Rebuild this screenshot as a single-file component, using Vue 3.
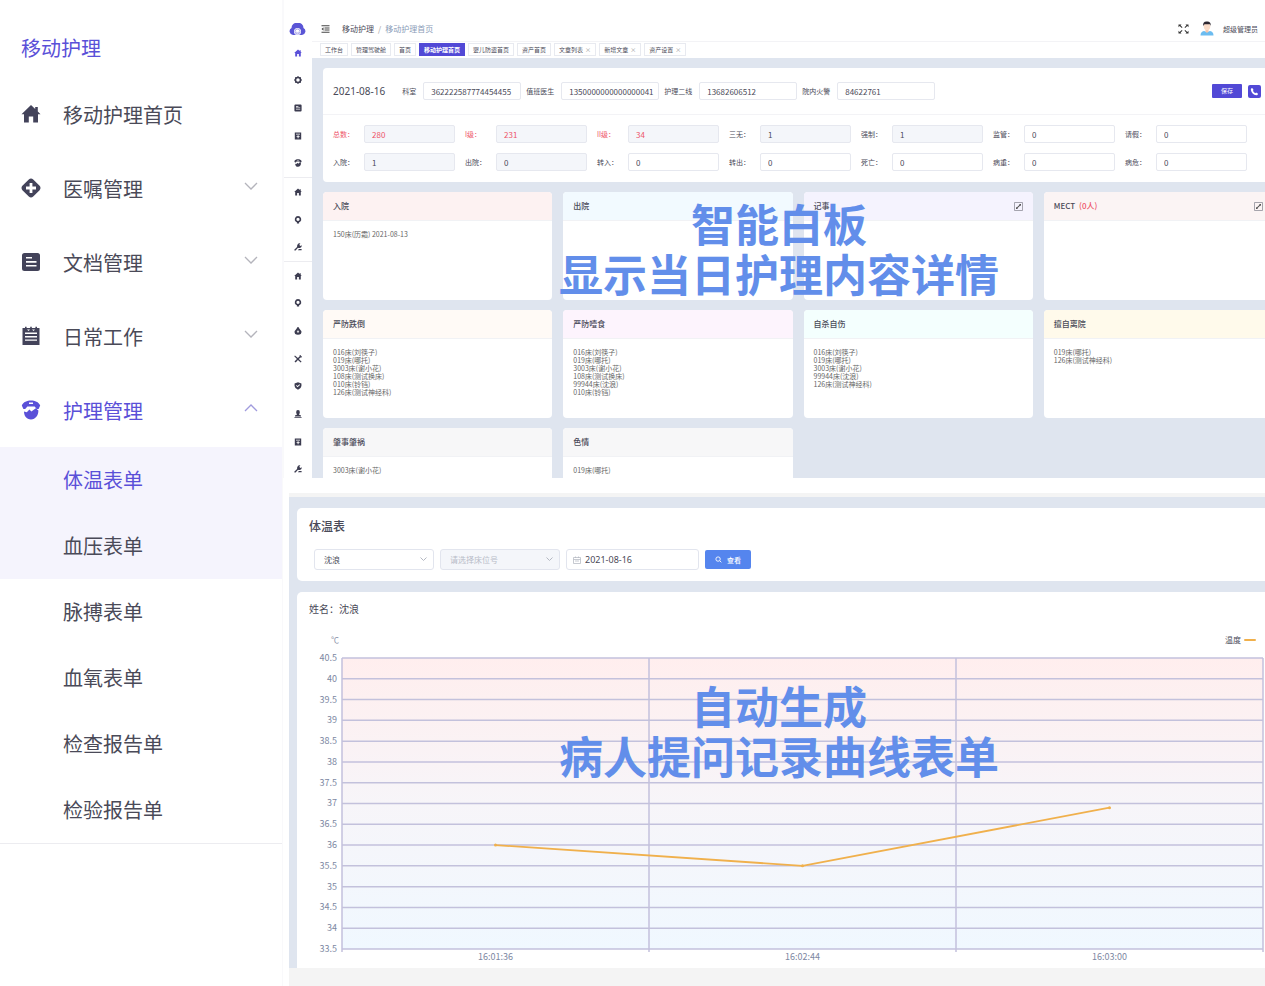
<script setup>
import { ref } from 'vue'

const icons = {
  home: 'M10 1 .5 10.2H3V18.5H7.8V12.6H12.2V18.5H17V10.2H19.5L16.8 7.6V3H14.2V5Z',
  medical: 'M7.8 1.4Q10-.4 12.2 1.4L18.6 7.8Q20.4 10 18.6 12.2L12.2 18.6Q10 20.4 7.8 18.6L1.400 12.200Q-.4 10 1.400 7.800ZM8.600 5V8.600H5V11.400H8.600V15H11.400V11.400H15V8.600H11.400V5Z',
  doc: 'M3.5 1H16.5Q19 1 19 3.5V16.5Q19 19 16.5 19H3.5Q1 19 1 16.5V3.5Q1 1 3.5 1ZM5 5V6.6H11V5ZM5 9V10.8H15.5V9ZM5 13V14.6H15.5V13Z',
  note: 'M1.5 2H4V.8H5.6V2H9.2V.8H10.8V2H14.4V.8H16V2H18.5V19H1.5ZM4 6.6V8H16V6.6ZM4 10V11.4H16V10ZM4 13.4V14.8H16V13.4ZM6 3.4 7.6 5 9 3.4ZM11 3.4 12.6 5 14 3.4Z',
  nurse: 'M.8 5.600C2.400 2 6 .6 10 .6S17.600 2 19.200 5.600L17.600 9H15.800L13.600 6.400H6.400L4.200 9H2.400ZM8 2.600V4H12V2.600ZM3 11.600 5.800 12.200 8.400 9.400 10.400 11.600 14.800 8.200 17.400 10.600C17.400 15.600 14.600 19.400 10 19.400S3 16 3 11.600Z',
  gear: 'M10 0 13 2.400 17.500 3 17.600 7 20 10 17.600 13 17.500 17 13 17.600 10 20 7 17.600 2.500 17 2.400 13 0 10 2.400 7 2.500 3 7 2.400ZM10 5.600A4.400 4.400 0 1 0 10 14.400 4.400 4.400 0 1 0 10 5.600Z',
  box: 'M2 1H18V19H2ZM5 4.600V6H15V4.600ZM9 8V10.400H6.400V12.800H9V15.400H11.400V12.800H14V10.400H11.400V8Z',
  pin: 'M10 0A8.400 8.400 0 0 1 15.400 14.600L12.800 15.600V19H7.200V15.600L4.600 14.600A8.400 8.400 0 0 1 10 0ZM10 4.200A4 4 0 1 0 10 12.200 4 4 0 1 0 10 4.200Z',
  wrench: 'M11 1Q15 0 16 1L13.200 4.600 15.600 7.400 19.400 5.600Q20 11 15 12.400 12 13 10 12L4 18.600Q1 19.600.6 16.600L7.600 10Q7 4 11 1ZM12 15H19V18H10Z',
  drop: 'M8 .5H12L13.200 4 18.600 10.600Q19.600 19.500 10 19.500T1.400 10.600L6.800 4ZM10 8 6.600 11.600H9V15H11V11.600H13.400Z',
  tools: 'M2.400 1 9.800 7.800 14.200 3.200 13.800.8 17 0 17 3 20 3.200 19 6.400 16.400 6 12.200 10.200 19 16.600 16.800 19 9.800 12.600 4.200 18.800 1.200 16 7.400 10.200.6 3.200Z',
  shield: 'M10 .6 18.600 3.600V10Q18 16.400 10 19.600 2 16.400 1.400 10V3.600ZM5.200 9.200 9 13 15 7.200 13.600 5.800 9 10.200 6.600 7.800Z',
  user: 'M10 0Q15 0 14.600 6 14 9.600 12.200 11L17.500 13.600V16H2.500V13.600L7.800 11Q6 9.600 5.400 6 5 0 10 0ZM1 17.400H19V19.600H1Z',
}

const menu = [
  { icon: 'home', text: '移动护理首页' },
  { icon: 'medical', text: '医嘱管理', arrow: 'down' },
  { icon: 'doc', text: '文档管理', arrow: 'down' },
  { icon: 'note', text: '日常工作', arrow: 'down' },
  { icon: 'nurse', text: '护理管理', arrow: 'up' },
]
const submenu = ['体温表单', '血压表单', '脉搏表单', '血氧表单', '检查报告单', '检验报告单']

const railGroups = [
  ['home', 'gear', 'doc', 'box', 'nurse'],
  ['home', 'pin', 'wrench'],
  ['home', 'pin', 'drop', 'tools', 'shield', 'user', 'box', 'wrench'],
]

const tabs = [
  { text: '工作台' },
  { text: '管理驾驶舱' },
  { text: '首页' },
  { text: '移动护理首页', active: true },
  { text: '婴儿防盗首页' },
  { text: '资产首页' },
  { text: '文章列表', closable: true },
  { text: '新增文章', closable: true },
  { text: '资产设置', closable: true },
]

const contacts = ref([
  { id: 'dept', label: '科室', value: '362222587774454455' },
  { id: 'doctor', label: '值班医生', value: '1350000000000000041' },
  { id: 'second', label: '护理二线', value: '13682606512' },
  { id: 'fire', label: '院内火警', value: '84622761' },
])

const stats = ref([
  { label: '总数', value: '280', locked: true, red: true },
  { label: 'I级', value: '231', locked: true, red: true },
  { label: 'II级', value: '34', locked: true, red: true },
  { label: '三无', value: '1', locked: true },
  { label: '强制', value: '1', locked: true },
  { label: '监管', value: '0' },
  { label: '请假', value: '0' },
  { label: '入院', value: '1', locked: true },
  { label: '出院', value: '0', locked: true },
  { label: '转入', value: '0' },
  { label: '转出', value: '0' },
  { label: '死亡', value: '0' },
  { label: '病重', value: '0' },
  { label: '病危', value: '0' },
])

const boards = [
  { title: '入院', tone: 'rose', rows: ['150床(历霜) 2021-08-13'] },
  { title: '出院', tone: 'sky', rows: [] },
  { title: '记事', tone: 'violet', rows: [], expand: true },
  { title: 'MECT', count: '(0人)', tone: 'blush', rows: [], expand: true },
  { title: '严防跌倒', tone: 'peach', rows: ['016床(刘筷子)', '019床(哪托)', '3003床(谢小花)', '108床(测试换床)', '010床(铃铛)', '126床(测试神经科)'] },
  { title: '严防噎食', tone: 'pink', rows: ['016床(刘筷子)', '019床(哪托)', '3003床(谢小花)', '108床(测试换床)', '99944床(沈浪)', '010床(铃铛)'] },
  { title: '自杀自伤', tone: 'mint', rows: ['016床(刘筷子)', '019床(哪托)', '3003床(谢小花)', '99944床(沈浪)', '126床(测试神经科)'] },
  { title: '擅自离院', tone: 'cream', rows: ['019床(哪托)', '126床(测试神经科)'] },
  { title: '肇事肇祸', tone: 'grey', rows: ['3003床(谢小花)'] },
  { title: '色情', tone: 'grey', rows: ['019床(哪托)'] },
]

const yMax = 40.5
const yMin = 33.5
const yTicks = Array.from({ length: 15 }, (_, i) => yMax - i * 0.5)
const readings = [
  { time: '16:01:36', value: 36 },
  { time: '16:02:44', value: 35.5 },
  { time: '16:03:00', value: 36.9 },
]
const plotW = 921
const plotH = 291
const toY = (v) => ((yMax - v) / (yMax - yMin)) * plotH
const points = readings.map((r, i) => ({ x: ((i + 0.5) * plotW) / 3, y: toY(r.value) }))
const line = points.map((p) => `${p.x},${p.y}`).join(' ')

const patient = ref('沈浪')
const date = ref('2021-08-16')
</script>

<template>
  <div class="page">
    <aside class="side">
      <h1 class="side-title">移动护理</h1>
      <nav>
        <button v-for="m in menu" :key="m.text" type="button" class="side-item" :class="{ on: m.arrow === 'up' }">
          <svg class="side-icon" viewBox="0 0 20 20"><path :d="icons[m.icon]" fill-rule="evenodd" /></svg>
          <span>{{ m.text }}</span>
          <svg v-if="m.arrow" class="chev" :class="m.arrow" viewBox="0 0 14 8"><path d="M1 1 7 7 13 1" /></svg>
        </button>
        <div class="sub">
          <a v-for="(s, i) in submenu" :key="s" href="#" class="sub-item" :class="{ tint: i < 2, on: i === 0 }">{{ s }}</a>
        </div>
      </nav>
    </aside>

    <div class="main">
      <section class="board">
        <div class="rail">
          <svg class="logo" viewBox="0 0 34 26">
            <path d="M8 24A7.500 7.500 0 0 1 5 10 12 11 0 0 1 29 10 7.500 7.500 0 0 1 26 24Z" fill="#5a55d6" />
            <circle cx="17" cy="17" r="7" fill="#fff" />
            <circle cx="17" cy="17" r="5" fill="none" stroke="#a9a6ea" stroke-width="2" />
            <path d="M14 18Q17 21 20 18" fill="none" stroke="#a9a6ea" stroke-width="1.500" />
          </svg>
          <div class="rail-list">
            <div v-for="(g, gi) in railGroups" :key="gi" class="rail-group" :style="{ flexGrow: g.length }">
              <a v-for="(n, i) in g" :key="i" href="#" class="rail-item" :class="{ on: gi === 0 && i === 0 }" :aria-label="n">
                <svg viewBox="0 0 20 20"><path :d="icons[n]" fill-rule="evenodd" /></svg>
              </a>
            </div>
          </div>
        </div>

        <div class="work">
          <header class="top">
            <svg class="fold" viewBox="0 0 18 16"><path d="M1 1.500H17M7 6H17M7 10H17M1 14.500H17" stroke="#444" stroke-width="2" /><path d="M5 4.500V11.500L1 8Z" fill="#444" /></svg>
            <div class="crumb"><a href="#">移动护理</a><i>/</i><b>移动护理首页</b></div>
            <svg class="full" viewBox="0 0 22 20"><path d="M1 1H7L5.200 2.800 9 6.600 7.600 8 3.400 4.200 1 6.500ZM21 1V6.500L18.600 4.200 14.400 8 13 6.600 16.800 2.800 15 1ZM1 19V13.500L3.400 15.800 7.600 12 9 13.400 5.200 17.200 7 19ZM21 19H15L16.800 17.200 13 13.400 14.400 12 18.600 15.800 21 13.500Z" fill="#333" /></svg>
            <svg class="avatar" viewBox="0 0 28 30">
              <path d="M1 29Q1 21 8 20L14 22 20 20Q27 21 27 29Z" fill="#6cbcf0" />
              <path d="M11 16H17V21L14 24 11 21Z" fill="#f6c7ac" />
              <ellipse cx="14" cy="10.500" rx="6.500" ry="8" fill="#fbdcc8" />
              <path d="M6.500 10Q5 1 13 1 22.500 0 21.500 10L20 6.500H9Z" fill="#2c2730" />
            </svg>
            <span class="user">超级管理员</span>
          </header>
          <div class="tabs">
            <button v-for="t in tabs" :key="t.text" type="button" class="tab" :class="{ on: t.active }">{{ t.text }}<i v-if="t.closable">×</i></button>
          </div>

          <div class="content">
            <div class="panel">
              <div class="duty">
                <strong class="day">2021-08-16</strong>
                <div v-for="c in contacts" :key="c.id" class="duty-field">
                  <label :for="c.id">{{ c.label }}</label>
                  <input :id="c.id" v-model="c.value" type="text" />
                </div>
                <button type="button" class="save">保存</button>
                <button type="button" class="call" aria-label="呼叫">
                  <svg viewBox="0 0 20 20"><path d="M5 2 8 6.500 6.400 8.400Q8.500 12 11.800 13.800L13.600 12 18 15Q17 18.600 14 18.400 4 16.500 1.800 6 1.600 2.600 5 2Z" fill="#fff" /></svg>
                </button>
              </div>
              <div class="stats">
                <div v-for="(s, i) in stats" :key="i" class="stat" :class="{ red: s.red }">
                  <label :for="'stat' + i">{{ s.label }}：</label>
                  <input :id="'stat' + i" v-model="s.value" type="text" :readonly="s.locked" :class="{ locked: s.locked }" />
                </div>
              </div>
            </div>
            <div class="cards">
              <article v-for="b in boards" :key="b.title" class="card">
                <header :class="b.tone">
                  <h2>{{ b.title }}<em v-if="b.count">{{ b.count }}</em></h2>
                  <svg v-if="b.expand" class="expand" viewBox="0 0 18 18"><path d="M1 1H17V17H1Z" fill="none" stroke="#8a8a94" stroke-width="1.500" /><path d="M10 4H14V8L12.600 6.800 6.800 12.600 8 14H4V10L5.400 11.200 11.200 5.400Z" fill="#555" /></svg>
                </header>
                <ul>
                  <li v-for="r in b.rows" :key="r">{{ r }}</li>
                </ul>
              </article>
            </div>
          </div>
        </div>
        <p class="caption cap-top">智能白板<br />显示当日护理内容详情</p>
      </section>

      <section class="temp">
        <div class="temp-body">
          <div class="box query">
            <h2>体温表</h2>
            <form class="form" @submit.prevent>
              <div class="sel">
                <select v-model="patient" aria-label="病人"><option>沈浪</option></select>
                <svg viewBox="0 0 14 8"><path d="M1 1 7 7 13 1" /></svg>
              </div>
              <div class="sel off">
                <select disabled aria-label="床位号"><option>请选择床位号</option></select>
                <svg viewBox="0 0 14 8"><path d="M1 1 7 7 13 1" /></svg>
              </div>
              <label class="date">
                <svg viewBox="0 0 16 16"><path d="M1 3H15V15H1ZM1 7H15M5 1V4M11 1V4M4 10H12" /></svg>
                <input v-model="date" type="text" aria-label="日期" />
              </label>
              <button type="submit" class="go">
                <svg viewBox="0 0 16 16"><circle cx="7" cy="7" r="5" /><path d="M11 11 14.500 14.500" /></svg>查看
              </button>
            </form>
          </div>
          <div class="box chart">
            <h3>姓名：沈浪</h3>
            <div class="chart-head"><span class="unit">℃</span><span class="legend">温度<i></i></span></div>
            <div class="chart-grid">
              <div class="y-axis"><span v-for="t in yTicks" :key="t">{{ t }}</span></div>
              <svg class="plot" :viewBox="`0 0 ${plotW} ${plotH}`" preserveAspectRatio="none">
                <defs>
                  <linearGradient id="heat" x1="0" y1="0" x2="0" y2="1">
                    <stop offset="0" stop-color="#ffeeee" />
                    <stop offset=".5" stop-color="#f7f5f9" />
                    <stop offset="1" stop-color="#f0f8ff" />
                  </linearGradient>
                </defs>
                <rect :width="plotW" :height="plotH" fill="url(#heat)" />
                <g class="grid">
                  <line v-for="t in yTicks" :key="t" x1="0" :x2="plotW" :y1="toY(t)" :y2="toY(t)" />
                  <line v-for="i in 4" :key="'v' + i" :x1="((i - 1) * plotW) / 3" :x2="((i - 1) * plotW) / 3" y1="0" :y2="plotH + 3" />
                </g>
                <polyline :points="line" class="curve" />
                <circle v-for="p in points" :key="p.x" :cx="p.x" :cy="p.y" r="1.500" fill="#f0b04c" />
              </svg>
              <div class="x-axis"><span v-for="r in readings" :key="r.time">{{ r.time }}</span></div>
            </div>
          </div>
        </div>
        <p class="caption cap-low">自动生成<br />病人提问记录曲线表单</p>
      </section>
    </div>
  </div>
</template>

<style>
body {
  margin: 0;
  background: #fff;
}
</style>

<style scoped>
* {
  box-sizing: border-box;
}
.page {
  display: flex;
  min-height: 100vh;
  overflow: hidden;
  color: #4a4a58;
  font-family: "Noto Sans CJK SC", "Noto Sans", sans-serif;
}
h1, h2, h3, p, ul {
  margin: 0;
  padding: 0;
  font-weight: 400;
}
ul {
  list-style: none;
}
i, em {
  font-style: normal;
}
a {
  color: inherit;
  text-decoration: none;
}
button, input, select {
  margin: 0;
  font-family: inherit;
  color: inherit;
}
button {
  border: 0;
  cursor: pointer;
}

/* side menu */
.side {
  flex: none;
  width: 283px;
  padding-top: 19px;
  border-right: 1px solid #f9f9fb;
}
.side-title {
  padding-left: 21px;
  font-size: 20px;
  line-height: 58px;
  color: #5a50d8;
}
.side-item {
  display: flex;
  align-items: center;
  width: 100%;
  height: 74px;
  padding: 0 24px 0 21px;
  background: none;
  font-size: 20px;
  text-align: left;
}
.side-icon {
  width: 20px;
  height: 20px;
  margin-right: 22px;
  fill: #43435a;
}
.side-item.on {
  color: #5a50d8;
}
.side-item.on .side-icon {
  fill: #5a50d8;
}
.chev {
  width: 14px;
  height: 8px;
  margin: 0 0 4px auto;
  fill: none;
  stroke: #b4b4bc;
  stroke-width: 1.3;
}
.chev.up {
  transform: rotate(180deg);
  stroke: #a09bdd;
}
.sub {
  border-bottom: 1px solid #ececf0;
}
.sub-item {
  display: block;
  padding-left: 63px;
  font-size: 20px;
  line-height: 66px;
}
.sub-item.tint {
  background: #f5f4fd;
}
.sub-item.on {
  color: #5a50d8;
}

.main {
  flex: 1;
  min-width: 0;
  display: flex;
  flex-direction: column;
}

/* whiteboard */
.board {
  position: relative;
  display: flex;
  height: 478px;
  overflow: hidden;
}
.rail {
  flex: none;
  width: 29px;
  border-left: 1px solid #f9f9fb;
}
.logo {
  display: block;
  width: 17px;
  height: 13px;
  margin: 23px auto 3px 5px;
}
.rail-list {
  display: flex;
  flex-direction: column;
  height: 444px;
}
.rail-group {
  display: flex;
  flex-direction: column;
  flex-basis: 0;
}
.rail-group + .rail-group {
  border-top: 1px solid #ececf0;
}
.rail-item {
  flex: 1;
  display: flex;
  align-items: center;
  justify-content: center;
}
.rail-item svg {
  width: 8px;
  height: 8px;
  fill: #3c3c50;
}
.rail-item.on svg {
  fill: #5a50d8;
}
.work {
  flex: 1;
  min-width: 0;
  display: flex;
  flex-direction: column;
}
.top {
  flex: none;
  display: flex;
  align-items: center;
  height: 42px;
  padding: 16px 7px 0 9px;
  border-bottom: 1px solid #f3f3f6;
}
.fold {
  width: 9px;
  height: 8px;
  margin-right: 12px;
}
.crumb {
  display: flex;
  gap: 4px;
  font-size: 8px;
  line-height: 10px;
}
.crumb b {
  font-weight: 400;
  color: #8a9cb8;
}
.crumb i {
  color: #999;
}
.full {
  width: 11px;
  height: 10px;
  margin-left: auto;
}
.avatar {
  width: 14px;
  height: 15px;
  margin: 0 9px 0 11px;
}
.user {
  font-size: 7px;
}
.tabs {
  flex: none;
  display: flex;
  gap: 3px;
  height: 16px;
  padding: 1px 8px 0;
}
.tab {
  height: 13px;
  padding: 0 4px;
  border: 1px solid #e8eaf0;
  background: #fff;
  font-size: 6px;
  line-height: 11px;
  white-space: nowrap;
}
.tab i {
  margin-left: 2px;
  color: #999;
}
.tab.on {
  border-color: #5249d6;
  background: #5249d6;
  color: #fff;
  font-weight: 700;
}
.content {
  flex: 1;
  min-height: 0;
  margin-right: -8px;
  padding: 10px 0 0 11px;
  background: #dfe5ef;
}
.panel {
  border-radius: 4px;
  background: #fff;
}
.duty {
  display: flex;
  align-items: center;
  height: 47px;
  padding: 0 12px 0 10px;
  border-bottom: 1px solid #f3f3f6;
}
.day {
  margin-right: 17px;
  font: 400 10px "Noto Sans", sans-serif;
}
.duty-field {
  display: flex;
  align-items: center;
  gap: 7px;
  margin-right: 5px;
  font-size: 7px;
  white-space: nowrap;
}
.duty-field input {
  width: 98px;
}
.panel input {
  min-width: 0;
  height: 18px;
  padding: 0 2px 0 7px;
  border: 1px solid #e6e8ef;
  border-radius: 2px;
  background: #fff;
  font-size: 8px;
}
.save {
  width: 30px;
  height: 14px;
  margin: 0 6px 0 auto;
  padding: 0;
  border-radius: 1px;
  background: #5249d6;
  color: #fff;
  font-size: 6px;
  line-height: 14px;
}
.call {
  width: 13px;
  height: 13px;
  padding: 2px;
  border-radius: 2px;
  background: #5249d6;
}
.call svg {
  display: block;
}
.stats {
  display: grid;
  grid-template-columns: repeat(7, minmax(0, 1fr));
  row-gap: 10px;
  padding: 10px 16px 11px 10px;
}
.stat {
  display: flex;
  align-items: center;
  padding-right: 10px;
  font-size: 7px;
}
.stat label {
  flex: none;
  width: 31px;
}
.stat input {
  flex: 1;
}
.stat input.locked {
  background: #f4f6fa;
}
.stat.red {
  color: #ee5468;
}
.cards {
  display: grid;
  grid-template-columns: repeat(4, minmax(0, 1fr));
  grid-auto-rows: 108px;
  gap: 10px 11px;
  padding-top: 10px;
}
.card {
  border-radius: 4px;
  background: #fff;
  overflow: hidden;
}
.card header {
  display: flex;
  align-items: center;
  justify-content: space-between;
  height: 29px;
  padding: 0 10px;
  border-bottom: 1px solid #f1f2f5;
}
.card h2 {
  font-size: 8px;
  line-height: 10px;
  font-weight: 500;
}
.card em {
  margin-left: 4px;
  color: #ee5468;
}
.card ul {
  padding: 9px 10px;
  font-size: 7px;
  line-height: 8px;
  color: #666;
}
.expand {
  width: 9px;
  height: 9px;
}
.rose { background: #fdf2f2; }
.sky { background: #f2faff; }
.violet { background: #f5f3fe; }
.blush { background: #fbf4f4; }
.peach { background: #fffaf6; }
.pink { background: #fdf4fd; }
.mint { background: #f4fffe; }
.cream { background: #fffaeb; }
.grey { background: #f7f7f8; }

.caption {
  position: absolute;
  left: 0;
  right: 0;
  color: #628eea;
  font-size: 44px;
  line-height: 50px;
  font-weight: 700;
  text-align: center;
  pointer-events: none;
}
.cap-top {
  top: 198px;
  padding-left: 10px;
}
.cap-low {
  top: 183px;
  padding-left: 4px;
}

/* temperature sheet */
.temp {
  position: relative;
  flex: 1;
  margin: 15px 0 0 6px;
  border-top: 4px solid #f4f4f4;
  background: #f4f4f4;
  overflow: hidden;
}
.temp-body {
  margin-right: -8px;
  padding: 11px 0 0 8px;
  background: #dfe5ef;
}
.box {
  padding-left: 12px;
  background: #fff;
}
.query {
  height: 73px;
  margin-bottom: 11px;
  border-radius: 5px;
}
.query h2 {
  padding-top: 9px;
  font-size: 12px;
  line-height: 18px;
  font-weight: 500;
}
.form {
  display: flex;
  align-items: center;
  gap: 6px;
  padding: 14px 0 0 5px;
}
.sel {
  position: relative;
  width: 120px;
}
.sel select {
  display: block;
  width: 100%;
  height: 21px;
  padding: 0 9px;
  border: 1px solid #e2e5ee;
  border-radius: 3px;
  background: #fff;
  appearance: none;
  font-size: 8px;
}
.sel.off select {
  background: #f4f6fa;
  color: #b8bcc8;
  opacity: 1;
}
.sel svg {
  position: absolute;
  top: 8px;
  right: 7px;
  width: 7px;
  height: 4px;
  fill: none;
  stroke: #b4b8c2;
  stroke-width: 2;
}
.date {
  display: flex;
  align-items: center;
  width: 133px;
  height: 21px;
  padding: 0 6px;
  border: 1px solid #e2e5ee;
  border-radius: 3px;
}
.date svg {
  flex: none;
  width: 8px;
  height: 8px;
  fill: none;
  stroke: #b4b8c2;
  stroke-width: 1.5;
}
.date input {
  flex: 1;
  min-width: 0;
  padding: 0 4px;
  border: 0;
  background: none;
  font: 400 9px "Noto Sans", sans-serif;
}
.go {
  display: flex;
  align-items: center;
  justify-content: center;
  gap: 5px;
  width: 46px;
  height: 19px;
  padding: 0;
  border-radius: 2px;
  background: #5585ee;
  color: #fff;
  font-size: 7px;
  font-weight: 500;
}
.go svg {
  width: 7px;
  height: 7px;
  fill: none;
  stroke: #fff;
  stroke-width: 2;
}
.chart {
  padding: 9px 10px 3px 12px;
  border-radius: 5px 0 0 0;
}
.chart h3 {
  font-size: 10px;
  line-height: 16px;
}
.chart-head {
  display: flex;
  justify-content: space-between;
  align-items: center;
  height: 41px;
  padding: 4px 7px 0 22px;
  font-size: 8px;
}
.unit {
  color: #8b93a8;
}
.legend {
  display: flex;
  align-items: center;
  gap: 3px;
}
.legend i {
  width: 12px;
  height: 2px;
  border-radius: 1px;
  background: #f0b04c;
}
.chart-grid {
  display: grid;
  grid-template-columns: 28px 1fr;
  column-gap: 5px;
  color: #7d88a2;
  font-size: 9px;
}
.y-axis {
  display: flex;
  flex-direction: column;
  justify-content: space-between;
  margin: -5px 0;
  line-height: 10px;
  text-align: right;
}
.plot {
  display: block;
  width: 100%;
  height: 291px;
  overflow: visible;
}
.grid line {
  stroke: #c3c1dc;
  stroke-width: 1.5;
  vector-effect: non-scaling-stroke;
}
.curve {
  fill: none;
  stroke: #f0b04c;
  stroke-width: 1.8;
  vector-effect: non-scaling-stroke;
}
.x-axis {
  grid-column: 2;
  display: grid;
  grid-template-columns: repeat(3, 1fr);
  line-height: 16px;
  text-align: center;
}
</style>
